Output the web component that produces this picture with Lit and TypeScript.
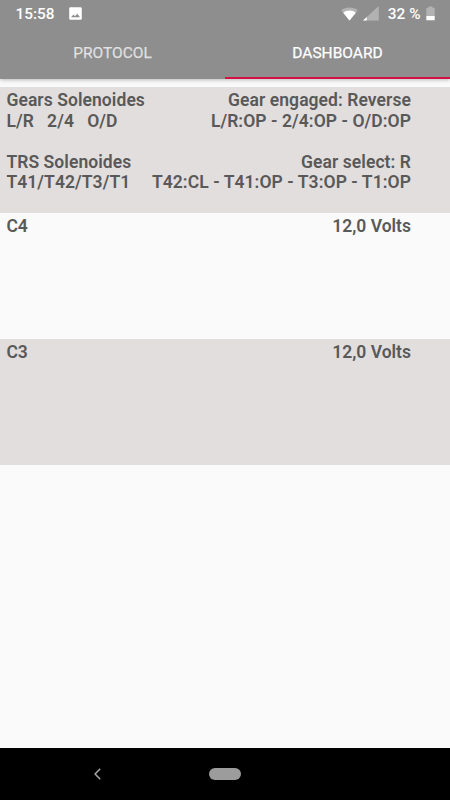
import { LitElement, html, css, svg } from "lit";
import { customElement, state } from "lit/decorators.js";

interface Row {
  left: string[];
  right: string[];
}

const ROWS: Row[] = [
  {
    left: ["Gears Solenoides", "L/R   2/4   O/D", "", "TRS Solenoides", "T41/T42/T3/T1"],
    right: [
      "Gear engaged: Reverse",
      "L/R:OP - 2/4:OP - O/D:OP",
      "",
      "Gear select: R",
      "T42:CL - T41:OP - T3:OP - T1:OP",
    ],
  },
  { left: ["C4"], right: ["12,0 Volts"] },
  { left: ["C3"], right: ["12,0 Volts"] },
];

const TABS = ["PROTOCOL", "DASHBOARD"];

@customElement("status-bar")
export class StatusBar extends LitElement {
  static styles = css`
    :host {
      display: flex;
      align-items: center;
      height: 27px;
      padding: 0 15.5px;
      color: #fff;
      font: 500 15.4px/27px Roboto, sans-serif;
    }
    svg {
      display: block;
      flex: none;
    }
    .picture {
      margin-left: 14px;
      margin-right: auto;
    }
    .time,
    .level {
      white-space: pre;
      padding-top: 1px;
    }
    .signal {
      margin: 0 9px 0 5px;
    }
    .battery {
      margin-left: 5px;
    }
  `;

  render() {
    return html`
      <span class="time">15:58</span>
      <svg class="picture" width="13" height="13" viewBox="0 0 13 13">
        <path
          fill="#fff"
          fill-rule="evenodd"
          d="M1.4 0.2h10.2a1.2 1.2 0 0 1 1.2 1.2v10.2a1.2 1.2 0 0 1-1.2 1.2H1.4a1.2 1.2 0 0 1-1.2-1.2V1.4A1.2 1.2 0 0 1 1.4 .2zM2 10.3h9L8.3 6.700 6 9.200 4.500 7.500z"
        />
      </svg>
      <svg class="wifi" width="17" height="14" viewBox="0 0 17 14">
        ${svg`<path fill="#fff" fill-opacity=".32" d="M8.5 13.6 0.2 3.2C2.4 1.4 5.3 .4 8.5 .4s6.1 1 8.3 2.8z" />
        <path fill="#fff" d="M8.5 13.6 2.2 5.7C4 4.2 6.2 3.4 8.5 3.4s4.5 .8 6.3 2.3z" />`}
      </svg>
      <svg class="signal" width="16" height="15" viewBox="0 0 16 15">
        <path fill="#fff" fill-opacity=".32" d="M0 14.6 15.8 0v14.6z" />
        <path fill="#fff" d="M0 14.6 3.8 11.1v3.5z" />
      </svg>
      <span class="level">32 %</span>
      <svg class="battery" width="9" height="15" viewBox="0 0 9 15">
        <path fill="#fff" fill-opacity=".32" d="M2.5 .5h4v1.3h1.5q.7 0 .7 .7V10H.3V2.5q0-.7 .7-.7h1.5z" />
        <path fill="#fff" d="M.3 10h8.4v3.7q0 .6-.7 .6H1q-.7 0-.7-.6z" />
      </svg>
    `;
  }
}

@customElement("tab-strip")
export class TabStrip extends LitElement {
  @state() private active = 1;

  static styles = css`
    :host {
      display: grid;
      grid-template-columns: 1fr 1fr;
      height: 52px;
    }
    .tab {
      display: flex;
      align-items: center;
      justify-content: center;
      box-sizing: border-box;
      padding-top: 2px;
      border-bottom: 2px solid transparent;
      color: rgba(255, 255, 255, 0.7);
      font: 400 15.5px/20px Roboto, sans-serif;
      -webkit-text-stroke: 0.25px currentColor;
      cursor: pointer;
    }
    .active {
      color: #fff;
      border-bottom-color: #d31145;
    }
  `;

  render() {
    return TABS.map(
      (label, i) => html`<div
        class="tab ${i === this.active ? "active" : ""}"
        @click=${() => (this.active = i)}
      >${label}</div>`
    );
  }
}

@customElement("app-root")
export class AppRoot extends LitElement {
  static styles = css`
    :host {
      display: flex;
      flex-direction: column;
      height: 800px;
      background: #fafafa;
      overflow: hidden;
    }
    .header {
      flex: none;
      height: 79px;
      background: #8e8e8e;
      box-shadow: 0 1px 4px rgba(0, 0, 0, 0.26);
    }
    .list {
      flex: 1;
      padding-top: 8px;
    }
    .row {
      display: flex;
      justify-content: space-between;
      box-sizing: border-box;
      height: 126px;
      padding: 3px 39px 0 6.4px;
      color: #595959;
      font: 600 17.5px/20.5px Roboto, sans-serif;
    }
    .row:first-child {
      letter-spacing: 0.07px;
    }
    .row:nth-child(odd) {
      background: #e2dedd;
    }
    .line {
      height: 20.5px;
      white-space: pre;
    }
    .right {
      text-align: right;
    }
    .nav {
      flex: none;
      display: grid;
      grid-template-columns: 195px 60px 195px;
      align-items: center;
      justify-items: center;
      height: 52px;
      background: #000;
    }
    .back {
      display: block;
    }
    .home {
      width: 32px;
      height: 12px;
      border-radius: 6px;
      background: #9c9c9c;
    }
  `;

  render() {
    return html`
      <div class="header">
        <status-bar></status-bar>
        <tab-strip></tab-strip>
      </div>
      <div class="list">
        ${ROWS.map(
          (row) => html`<div class="row">
            <div class="left">${row.left.map((t) => html`<div class="line">${t}</div>`)}</div>
            <div class="right">${row.right.map((t) => html`<div class="line">${t}</div>`)}</div>
          </div>`
        )}
      </div>
      <div class="nav">
        <svg class="back" width="8" height="12" viewBox="0 0 8 12">
          <path d="M6.2 .8 1.1 6l5.1 5.2" fill="none" stroke="#a0a0a0" stroke-width="1.6" />
        </svg>
        <div class="home"></div>
      </div>
    `;
  }
}
